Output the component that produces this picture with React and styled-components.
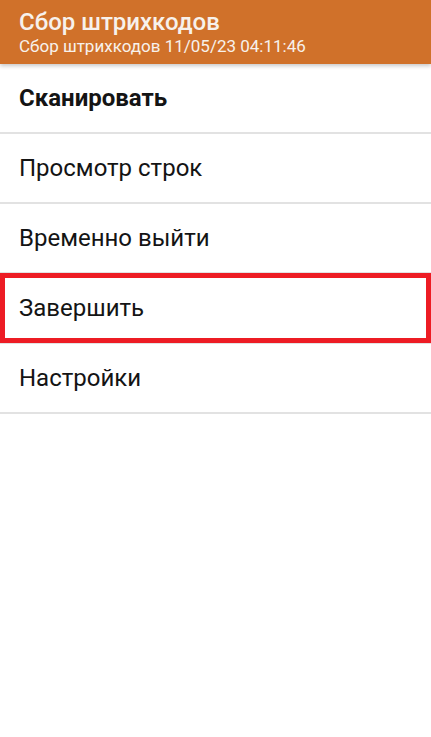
import React from "react";
import styled, { createGlobalStyle } from "styled-components";

const Global = createGlobalStyle`
  html, body { margin: 0; padding: 0; background: #ffffff; }
  body { font-family: Roboto, "Noto Sans", "Liberation Sans", sans-serif; }
  * { box-sizing: border-box; }
`;

const Screen = styled.div`
  width: 431px;
  height: 737px;
  background: #ffffff;
  display: flex;
  flex-direction: column;
  overflow: hidden;
`;

const Header = styled.header`
  height: 64px;
  background: #d0712a;
  display: flex;
  flex-direction: column;
  justify-content: center;
  padding: 0 19px 0;
  box-shadow: 0 2px 4px rgba(0, 0, 0, 0.22);
  position: relative;
  z-index: 2;
`;

const Title = styled.div`
  font-size: 24px;
  font-weight: 500;
  color: #f7f1ec;
  line-height: 26px;
`;

const Subtitle = styled.div`
  font-size: 17px;
  font-weight: 400;
  color: #f7f1ec;
  line-height: 20px;
  margin-top: 1px;
`;

const Menu = styled.nav`
  display: flex;
  flex-direction: column;
`;

const Item = styled.div`
  position: relative;
  height: 70px;
  display: flex;
  align-items: center;
  padding: 0 19px 0;
  border-bottom: 2px solid #e2e2e2;
  font-size: 24px;
  font-weight: ${(p) => (p.$bold ? 700 : 400)};
  color: #141414;
`;

const Highlight = styled.div`
  position: absolute;
  left: 0;
  right: 0;
  top: -1px;
  bottom: -1px;
  border: 5px solid #ed1c24;
  pointer-events: none;
`;

const items = [
  { label: "Сканировать", bold: true },
  { label: "Просмотр строк" },
  { label: "Временно выйти" },
  { label: "Завершить", highlight: true },
  { label: "Настройки" },
];

export default function App() {
  return (
    <>
      <Global />
      <Screen>
        <Header>
          <Title>Сбор штрихкодов</Title>
          <Subtitle>Сбор штрихкодов 11/05/23 04:11:46</Subtitle>
        </Header>
        <Menu>
          {items.map((it) => (
            <Item key={it.label} $bold={it.bold}>
              {it.label}
              {it.highlight && <Highlight />}
            </Item>
          ))}
        </Menu>
      </Screen>
    </>
  );
}
